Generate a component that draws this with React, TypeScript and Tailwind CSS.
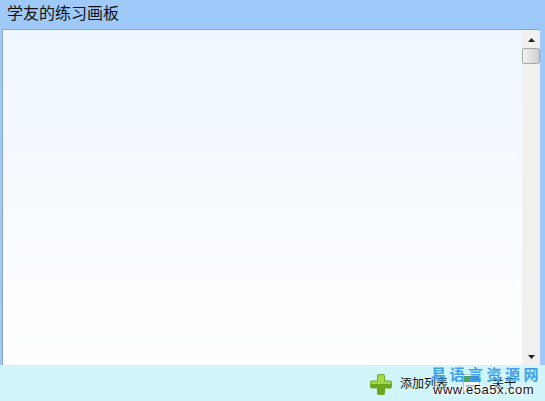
const cjk = "font-['Liberation_Sans','Noto_Sans_CJK_SC',sans-serif]";

const App = () => {
  return (
    <div className={`relative flex h-[401px] w-[545px] flex-col overflow-hidden bg-[#9fc9f8] ${cjk}`}>
      {/* Title */}
      <div className="flex h-[29px] shrink-0 items-center pb-[1px] pl-[7px] text-[16px] leading-none text-[#111]">
        学友的练习画板
      </div>

      {/* Canvas + scrollbar */}
      <div className="flex min-h-0 flex-1 pl-[2px] pr-[5px]">
        <div className="flex flex-1 border-t border-l border-[#8fa5bb] bg-gradient-to-b from-[#eef6ff] to-white" />
        <div className="flex w-[18px] shrink-0 flex-col items-center border-t border-[#8fa5bb] bg-[#f0f0ee]">
          <div className="flex h-[18px] w-full items-center justify-center pt-[2px]">
            <svg width="7" height="4" viewBox="0 0 7 4">
              <path d="M3.5 0 7 4H0z" fill="#222" />
            </svg>
          </div>
          <div className="h-[16px] w-[18px] rounded-[2px] border border-[#a8a8a8] bg-gradient-to-r from-[#f2f2f2] to-[#cfcfcf]" />
          <div className="flex-1" />
          <div className="flex h-[17px] w-full items-center justify-center">
            <svg width="7" height="4" viewBox="0 0 7 4">
              <path d="M0 0h7L3.5 4z" fill="#222" />
            </svg>
          </div>
        </div>
      </div>

      {/* Footer */}
      <div className="flex h-[36px] shrink-0 items-center bg-[#d0f5fa] pl-[370px]">
        <svg className="mt-[2px]" width="22" height="21" viewBox="0 0 22 21">
          <path d="M7 2a2 2 0 0 1 2-2h4a2 2 0 0 1 2 2v4.500h5a2 2 0 0 1 2 2v4a2 2 0 0 1-2 2h-5V19a2 2 0 0 1-2 2H9a2 2 0 0 1-2-2v-4.500H2a2 2 0 0 1-2-2v-4a2 2 0 0 1 2-2h5z" fill="#6aa81f" />
          <path d="M8 2a1 1 0 0 1 1-1h4a1 1 0 0 1 1 1v5.500h6a1 1 0 0 1 1 1V10H1V8.500a1 1 0 0 1 1-1h6z" fill="#a5d84a" />
        </svg>
        <span className="ml-[8px] mt-[2px] text-[12px] leading-none text-[#111]">添加列表</span>
        <svg className="ml-[15px]" width="17" height="18" viewBox="0 0 17 18">
          <rect x="0.500" y="0.500" width="16" height="17" fill="#f4f7fa" stroke="#b8c4cc" />
          <rect x="1" y="2" width="9" height="6" fill="#4aa56a" />
          <rect x="9" y="2" width="7" height="6" fill="#3f86c8" />
          <rect x="3" y="11" width="11" height="2" fill="#9fb4c6" />
        </svg>
        <span className="ml-[12px] mt-[2px] text-[12px] leading-none text-[#111]">关于</span>
      </div>

      {/* Watermark */}
      <div className="absolute left-[431px] top-[367px] flex flex-col">
        <div className="text-[15px] font-bold leading-[16px] tracking-[3.500px] whitespace-nowrap text-[#3f9fe8]">
          易语言资源网
        </div>
        <div className="ml-[2px] text-[13px] leading-[13px] tracking-[0.5px] whitespace-nowrap text-[#111] [text-shadow:0_0_2px_#fff,0_0_2px_#fff,0_0_2px_#fff,0_0_3px_#fff]">
          www.e5a5x.com
        </div>
      </div>
    </div>
  );
};

export default App;
